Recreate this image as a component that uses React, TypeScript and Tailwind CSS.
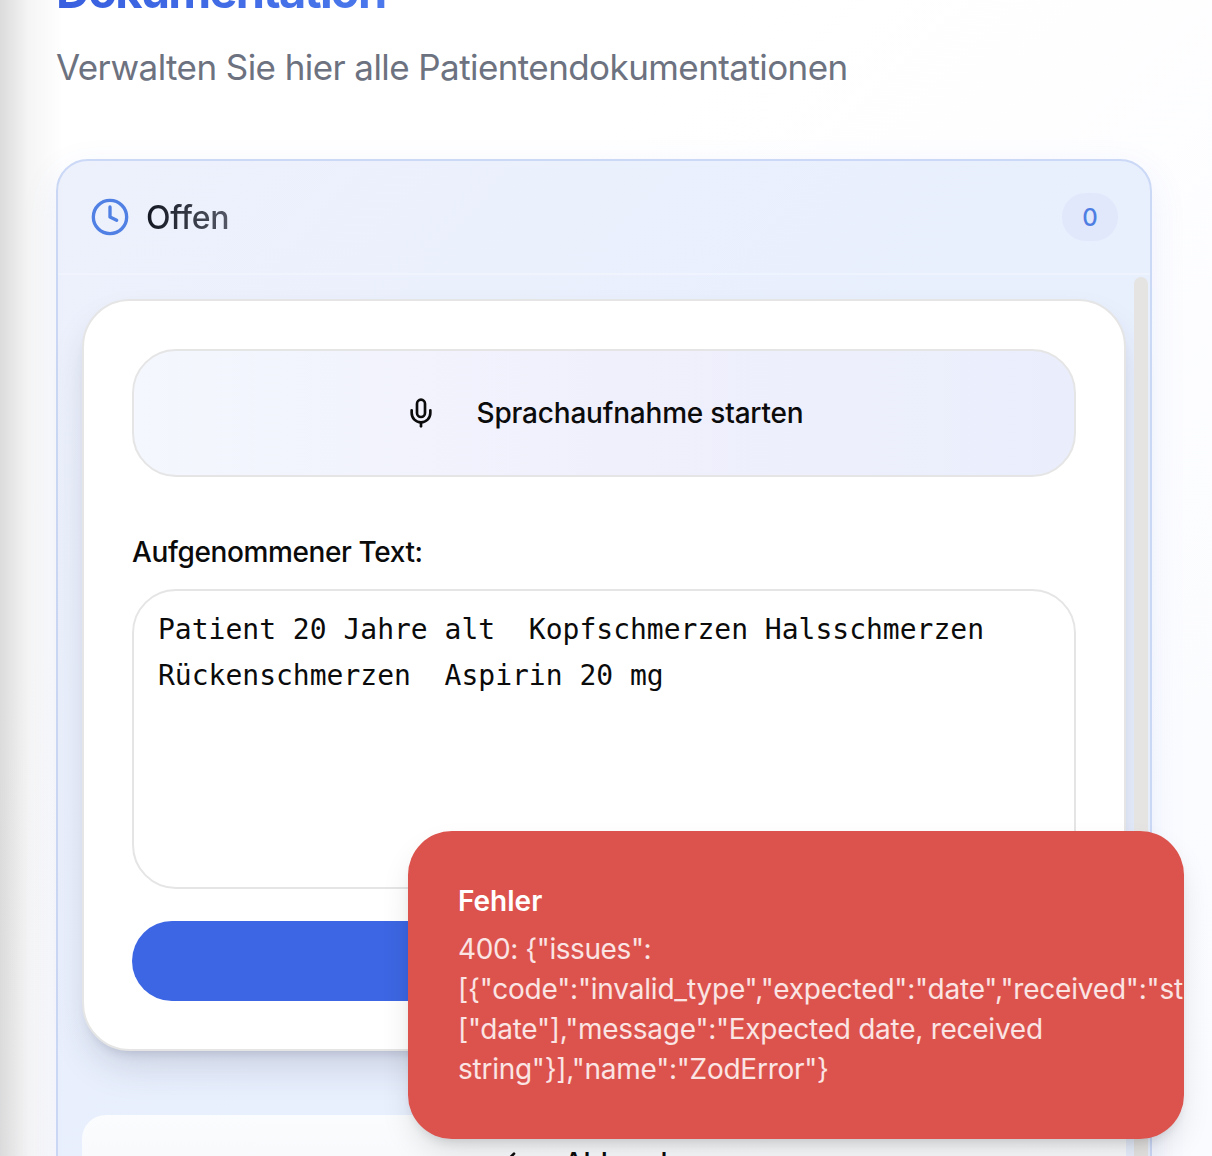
import React from 'react';
import { ArrowLeft, Clock, Mic } from 'lucide-react';

function PageHeader() {
  return (
    <header>
      <h1 className="-mt-[33px] w-fit bg-linear-to-r from-[#385fdf] to-[#4b78ec] bg-clip-text pb-1 text-[47px]/[48px] font-bold tracking-[-1.75px] text-transparent">
        Dokumentation
      </h1>
      <p className="mt-5 text-[35px]/[56px] tracking-[-0.58px] whitespace-nowrap text-[#6d7280]">
        Verwalten Sie hier alle Patientendokumentationen
      </p>
    </header>
  );
}

function ColumnHeader() {
  return (
    <div className="flex h-[114px] shrink-0 items-center justify-between border-b-2 border-white/25 px-8">
      <div className="flex items-center gap-4">
        <Clock size={40} strokeWidth={2} className="text-[#5080e4]" />
        <h2 className="bg-linear-to-r from-[#131722] to-[#555967] bg-clip-text pt-0.5 text-[32px]/[40px] font-medium tracking-[-0.3px] text-transparent">
          Offen
        </h2>
      </div>
      <span className="flex h-12 w-14 items-center justify-center rounded-3xl bg-[#e2e8fb] pt-px text-2xl font-medium text-[#4f7ee3]">
        0
      </span>
    </div>
  );
}

function RecordingCard() {
  return (
    <section className="flex flex-col rounded-[48px] border-2 border-[#e5e5e5] bg-white p-12 shadow-[0_20px_36px_-6px_rgba(40,50,80,0.17),0_8px_12px_-8px_rgba(40,50,80,0.22)]">
      <button className="flex h-32 items-center justify-center gap-10 rounded-[44px] border-2 border-[#e5e5e5] bg-linear-to-r from-[#f4f7fe] via-[#f0f0fc] to-[#eaeefc] text-[28px]/[40px] font-medium tracking-[-0.2px] text-[#0b0b0c]">
        <Mic size={32} strokeWidth={2} />
        Sprachaufnahme starten
      </button>
      <label className="mt-[61px] text-[28px]/[28px] font-medium tracking-[-0.38px] text-[#0b0b0c]">
        Aufgenommener Text:
      </label>
      <div className="mt-[23px] h-[300px] rounded-[44px] border-2 border-[#e5e5e5] bg-white px-6 pt-4 font-['DejaVu_Sans_Mono',monospace] text-[28px]/[46px] whitespace-pre text-[#0b0b0c]">
        {'Patient 20 Jahre alt  Kopfschmerzen Halsschmerzen\nRückenschmerzen  Aspirin 20 mg'}
      </div>
      <button className="mt-8 h-20 rounded-[40px] bg-[#3c66e3]" aria-label="Speichern" />
    </section>
  );
}

function ErrorToast() {
  return (
    <div
      role="alert"
      className="absolute top-[831px] left-[408px] h-[308px] w-[776px] overflow-hidden rounded-[44px] bg-[#dc524c] pt-[50px] pl-[50px] text-[28px]/[40px] whitespace-pre text-white shadow-[0_16px_32px_-4px_rgba(0,0,0,0.12),0_8px_12px_-6px_rgba(0,0,0,0.14)]"
    >
      <p className="font-semibold">Fehler</p>
      <div className="mt-2 tracking-[-0.26px] text-white/85">
        <p className="tracking-[-0.42px]">{'400: {"issues":'}</p>
        <p className="tracking-[-0.2px]">{'[{"code":"invalid_type","expected":"date","received":"st'}</p>
        <p>{'["date"],"message":"Expected date, received'}</p>
        <p>{'string"}],"name":"ZodError"}'}</p>
      </div>
    </div>
  );
}

export default function App() {
  return (
    <div className="relative h-[1156px] w-[1212px] overflow-hidden bg-linear-to-br from-white from-30% to-[#fafbff] font-['Inter',sans-serif]">
      <main className="flex flex-col pr-[60px] pl-14">
        <PageHeader />
        <div className="mt-16 flex h-[1200px] flex-col rounded-[32px] border-2 border-[#cbd8f6] bg-linear-to-br from-[#edf1fc] to-[#e8effd] to-50% shadow-[0_12px_36px_0_rgba(90,120,240,0.10)]">
          <ColumnHeader />
          <div className="flex grow pr-0.5">
            <div className="w-[1068px] shrink-0 pt-6 pl-6">
              <RecordingCard />
              <button className="mt-16 flex h-24 w-full items-center justify-center gap-[34px] rounded-3xl bg-linear-to-b from-[#fbfcfe] to-[#f6f7fa] text-[28px]/[40px] font-medium tracking-[-0.1px] text-[#0b0b0c]">
                <ArrowLeft size={32} strokeWidth={2} />
                Abbrechen
              </button>
            </div>
            <div className="mt-0.5 ml-2 w-3.5 rounded-t-lg bg-[#e5e4e2]" />
          </div>
        </div>
      </main>
      <div className="pointer-events-none absolute inset-y-0 left-0 w-16 bg-linear-to-r from-black/14 via-black/4 via-45% to-transparent" />
      <ErrorToast />
    </div>
  );
}
